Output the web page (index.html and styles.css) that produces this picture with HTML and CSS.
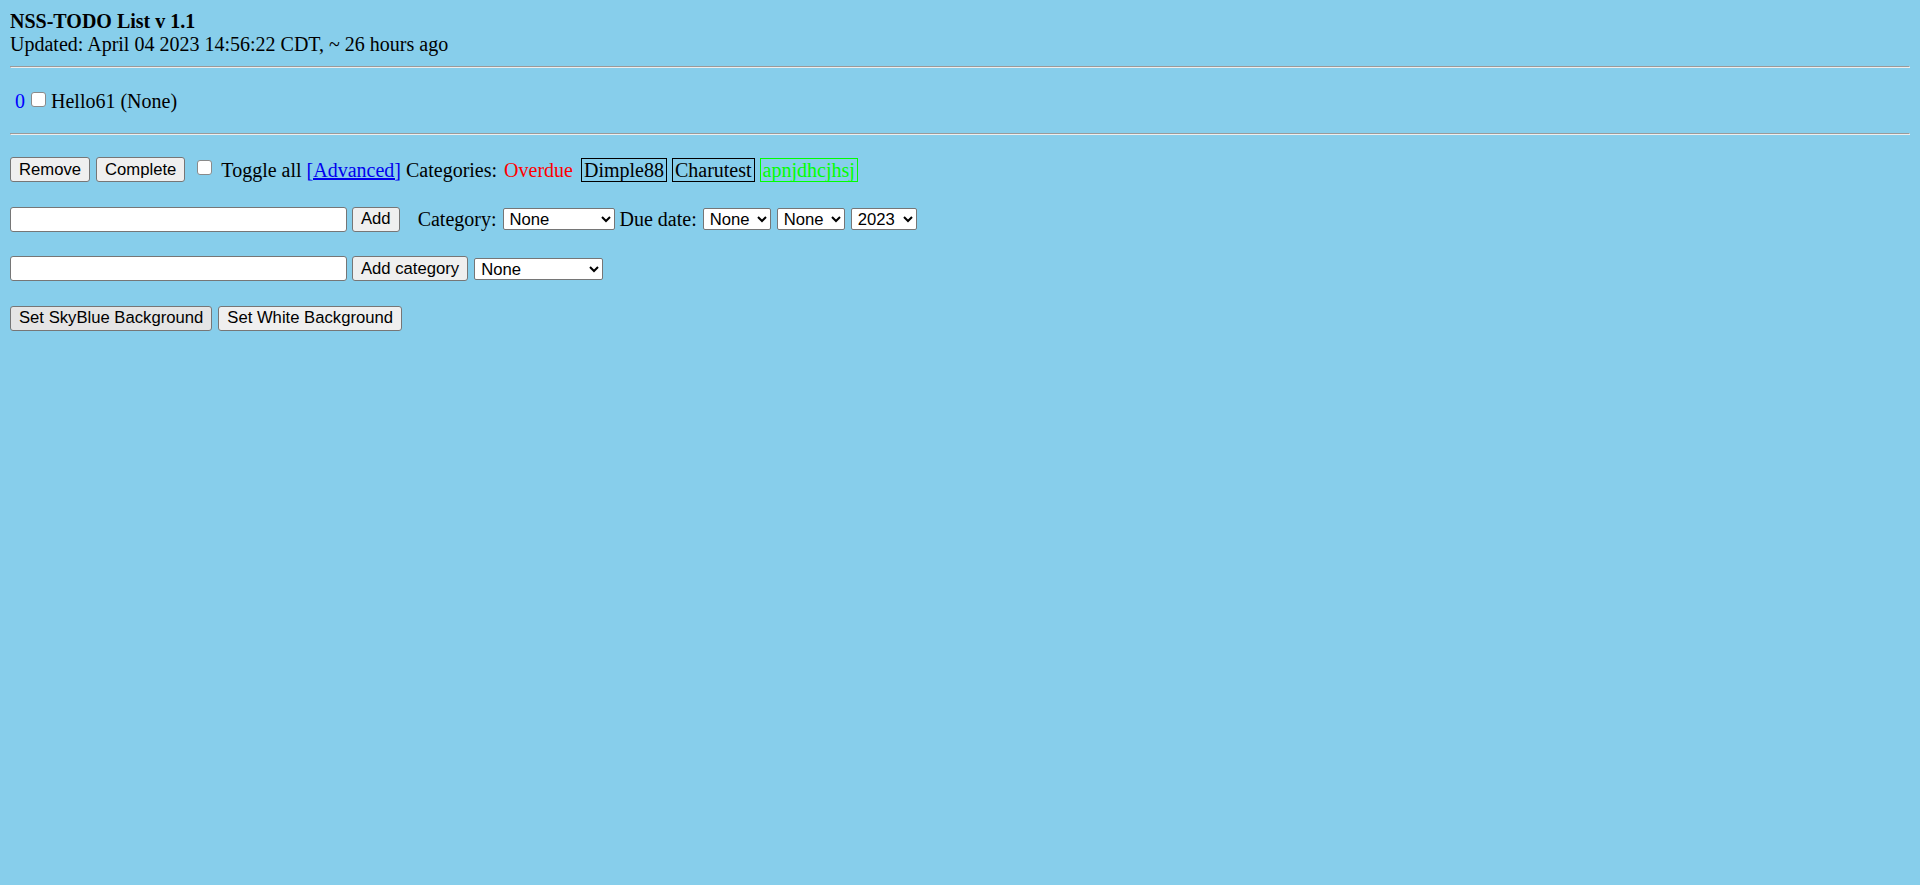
FILE: index.html
```html
<!DOCTYPE html>
<html lang="en">
<head>
<meta charset="utf-8">
<title>NSS-TODO List v 1.1</title>
<link rel="stylesheet" href="styles.css">
</head>
<body>
  <header class="head">
    <div class="title">NSS-TODO List v 1.1</div>
    <div class="updated">Updated: April 04 2023 14:56:22 CDT, ~ 26 hours ago</div>
  </header>
  <hr class="rule">
  <section class="items">
    <div class="item">
      <span class="idx">0</span>
      <input type="checkbox" class="check">
      <span class="item-text">Hello61 (None)</span>
    </div>
  </section>
  <hr class="rule">
  <section class="controls">
    <div class="row">
      <button class="btn">Remove</button>
      <button class="btn">Complete</button>
      <input type="checkbox" class="check toggle">
      <span class="inline-text">Toggle all <a href="#" class="link">[Advanced]</a> Categories: <span class="cat cat-overdue">Overdue</span> <span class="cat cat-box">Dimple88</span> <span class="cat cat-box">Charutest</span> <span class="cat cat-green">apnjdhcjhsj</span></span>
    </div>
    <div class="row">
      <input type="text" class="field">
      <button class="btn">Add</button>
      <span class="label label-cat">Category:</span>
      <select class="sel sel-cat"><option>None</option></select>
      <span class="label">Due date:</span>
      <select class="sel sel-small"><option>None</option></select>
      <select class="sel sel-small"><option>None</option></select>
      <select class="sel sel-year"><option>2023</option></select>
    </div>
    <div class="row">
      <input type="text" class="field">
      <button class="btn">Add category</button>
      <select class="sel sel-wide"><option>None</option></select>
    </div>
    <div class="row">
      <button class="btn btn-active">Set SkyBlue Background</button>
      <button class="btn">Set White Background</button>
    </div>
  </section>
</body>
</html>
```

FILE: styles.css
```css
html, body {
  background: #87ceeb;
}

body {
  margin: 10px;
  font-family: "Liberation Serif", "Times New Roman", serif;
  font-size: 20px;
  line-height: 23px;
  color: #000;
}

.title {
  font-weight: bold;
}

.rule {
  margin: 10px 0;
  border: 1px inset;
  color: gray;
  height: 0;
}

.items {
  height: 45px;
  padding-top: 12px;
  box-sizing: border-box;
}

.item {
  display: flex;
  align-items: center;
  padding-left: 5px;
  height: 23px;
}

.idx {
  color: #0000ff;
  margin-right: 6px;
}

.check {
  appearance: none;
  -webkit-appearance: none;
  width: 15px;
  height: 15px;
  margin: 0;
  border: 1px solid #8a8a8a;
  border-radius: 3px;
  background: #fff;
  box-sizing: border-box;
}

.item .check {
  position: relative;
  top: -2px;
  margin-right: 5px;
}

.controls {
  display: flex;
  flex-direction: column;
  gap: 24.5px;
  padding-top: 12px;
}

.row {
  display: flex;
  align-items: center;
  gap: 5px;
  height: 25px;
}

.btn {
  font-family: "Liberation Sans", Arial, sans-serif;
  font-size: 16.67px;
  height: 25px;
  padding: 0 8px;
  margin: 0;
  background: #efefef;
  color: #000;
  border: 1px solid #767676;
  border-radius: 3px;
  box-sizing: border-box;
}

.btn + .btn {
  margin-left: 1px;
}

.btn-active {
  background: #e5e5e5;
}

.toggle {
  margin-left: 7px;
  margin-right: 4px;
  position: relative;
  top: -2px;
}

.inline-text {
  white-space: nowrap;
}

.link {
  color: #0000ee;
  text-decoration: underline;
}

.cat {
  display: inline-block;
  line-height: 22px;
  border: 1px solid transparent;
  padding: 0 2px;
}

.cat-overdue {
  color: #ff0000;
  padding: 0;
  margin-left: 1px;
  margin-right: 2px;
}

.cat-box {
  border-color: #000;
}

.cat-green {
  color: #00ff00;
  border-color: #00ff00;
}

.field {
  width: 337px;
  height: 25px;
  margin: 0;
  padding: 0 3px;
  border: 1px solid #767676;
  border-radius: 3px;
  background: #fff;
  box-sizing: border-box;
  font-family: "Liberation Sans", Arial, sans-serif;
  font-size: 16.67px;
}

.label-cat {
  margin-left: 13px;
}

.sel {
  height: 22px;
  margin: 0 0 0 1px;
  padding: 0 2px;
  border: 1px solid #767676;
  border-radius: 2px;
  background: #fff;
  color: #000;
  box-sizing: border-box;
  font-family: "Liberation Sans", Arial, sans-serif;
  font-size: 16.67px;
}

.sel-cat { width: 112px; }
.sel-small { width: 68px; }
.sel-year { width: 66px; }
.sel-wide { width: 129px; }
```
